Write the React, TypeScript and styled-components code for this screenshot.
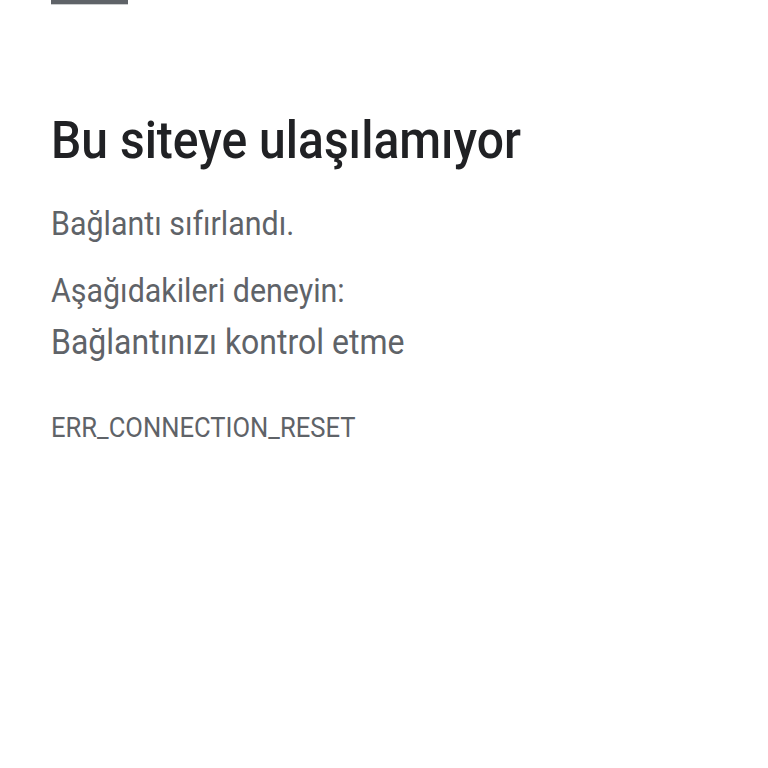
import React from 'react'
import styled, { createGlobalStyle } from 'styled-components'

const Global = createGlobalStyle`
    html, body {
        margin: 0;
        padding: 0;
        background: #ffffff;
        overflow: hidden;
    }
`

export default function App() {
    return (
        <Root>
            <Global />
            <TopBar />
            <Content>
                <Title>Bu siteye ulaşılamıyor</Title>
                <Message>Bağlantı sıfırlandı.</Message>
                <Suggestions>
                    <Message>Aşağıdakileri deneyin:</Message>
                    <Suggestion>Bağlantınızı kontrol etme</Suggestion>
                </Suggestions>
                <ErrorCode>ERR_CONNECTION_RESET</ErrorCode>
            </Content>
        </Root>
    )
}

// the screenshot is a little taller than wide, so the page is stretched vertically a bit
const Root = styled.main`
    width: 768px;
    height: 711px;
    background: #ffffff;
    font-family: Roboto, 'Noto Sans', sans-serif;
    box-sizing: border-box;
    padding: 0 51px;
    transform: scaleY(1.08);
    transform-origin: top left;
`

const TopBar = styled.div`
    width: 77px;
    height: 3.7px;
    background: #5f6368;
`

const Content = styled.div`
    display: flex;
    flex-direction: column;
    padding-top: 98.2px;
`

const Title = styled.h1`
    margin: 0 0 30.2px;
    font-size: 48px;
    font-weight: 500;
    line-height: 56px;
    color: #202124;
`

const Message = styled.p`
    margin: 0;
    font-size: 30.4px;
    line-height: 40px;
    color: #5f6368;
`

const Suggestions = styled.div`
    display: flex;
    flex-direction: column;
    margin-top: 22.1px;
`

const Suggestion = styled.div`
    margin-top: 6.7px;
    font-size: 32px;
    line-height: 40px;
    color: #5f6368;
`

const ErrorCode = styled.div`
    margin-top: 42.9px;
    font-size: 25.6px;
    line-height: 32px;
    color: #5f6368;
`
